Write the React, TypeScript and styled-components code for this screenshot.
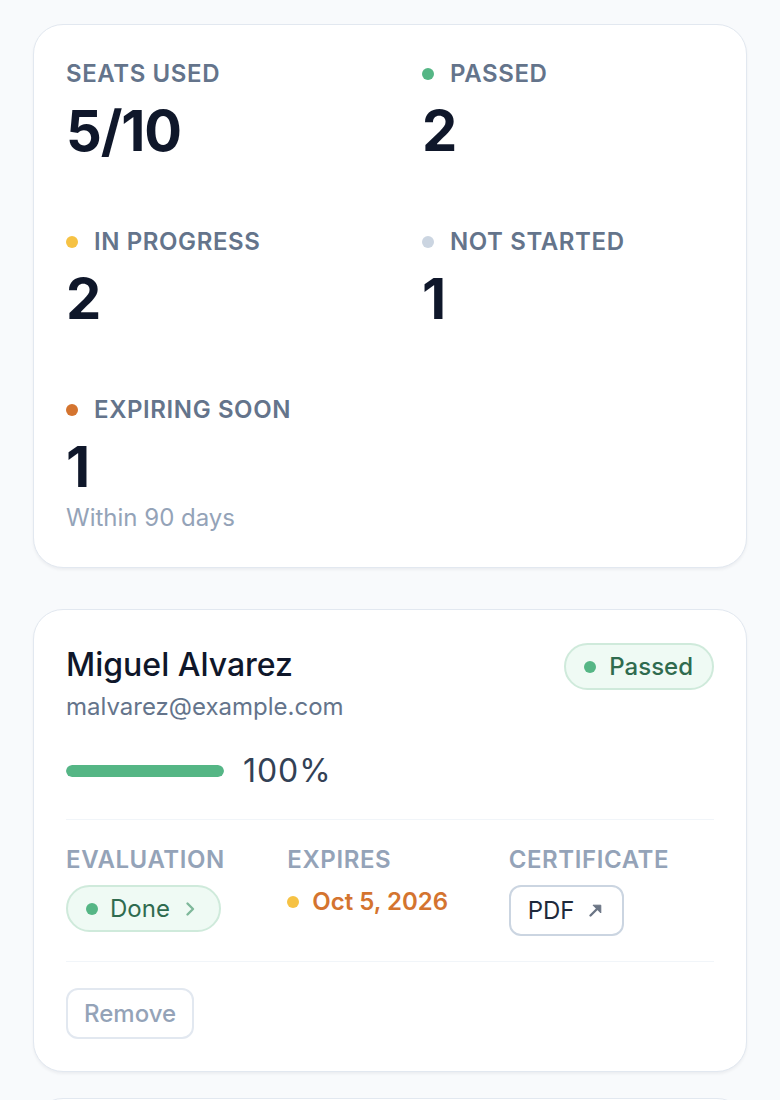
import React from 'react';
import styled, { createGlobalStyle } from 'styled-components';

const GlobalStyle = createGlobalStyle`
  * { box-sizing: border-box; }
  body {
    margin: 0;
    background: #f8fafc;
    font-family: Inter, "Noto Sans", sans-serif;
    color: #0f172a;
  }
`;

const colors = {
  green: '#55b685',
  yellow: '#f6c244',
  gray: '#cbd5e1',
  orange: '#d4742f',
};

const Page = styled.main`
  padding: 24px 33px;
  display: flex;
  flex-direction: column;
`;

const Card = styled.section`
  background: #fff;
  border: 1px solid #e2e8f0;
  border-radius: 30px;
  padding: 33px 32px 32px;
  box-shadow: 0 2px 3px rgba(15, 23, 42, 0.05);
`;

const Summary = styled(Card)`
  display: grid;
  grid-template-columns: 1fr 1fr;
  column-gap: 64px;
  row-gap: 63px;
  padding-bottom: 33px;
  margin-bottom: 41px;
`;

const List = styled.div`
  display: flex;
  flex-direction: column;
  gap: 26px;
`;

const Stat = styled.div`
  display: flex;
  flex-direction: column;
`;

const StatLabel = styled.div`
  display: flex;
  align-items: center;
  gap: 16px;
  font-size: 24px;
  line-height: 32px;
  font-weight: 600;
  letter-spacing: 0.025em;
  color: #64748b;
  text-transform: uppercase;
`;

const Dot = styled.span<{ $color: string }>`
  width: 12px;
  height: 12px;
  border-radius: 50%;
  flex: none;
  background: ${(p) => p.$color};
`;

const StatValue = styled.div`
  margin-top: 9px;
  font-size: 56px;
  line-height: 64px;
  font-weight: 700;
  letter-spacing: -0.02em;
  color: #0f172a;
`;

const StatNote = styled.div`
  margin-top: 3px;
  font-size: 24px;
  line-height: 32px;
  color: #94a3b8;
`;

const Header = styled.div`
  display: flex;
  justify-content: space-between;
  align-items: flex-start;
`;

const Who = styled.div`
  display: flex;
  flex-direction: column;
  gap: 4px;
`;

const Name = styled.div`
  font-size: 32px;
  line-height: 44px;
  font-weight: 500;
  color: #0f172a;
`;

const Email = styled.div`
  font-size: 24px;
  line-height: 32px;
  color: #64748b;
`;

const Pill = styled.span`
  display: inline-flex;
  align-items: center;
  gap: 13px;
  height: 47px;
  padding: 0 19px 0 18px;
  border: 2px solid #cfeadb;
  border-radius: 999px;
  background: #effaf4;
  color: #2f6b4f;
  font-size: 24px;
  font-weight: 500;
  line-height: 32px;
  white-space: nowrap;
`;

const PillButton = styled(Pill).attrs({ as: 'button' })`
  font-family: inherit;
  font-weight: 400;
  cursor: pointer;
  gap: 12px;
  padding-right: 24px;
  svg {
    margin-left: 3px;
    color: #7fb89a;
  }
`;

const Progress = styled.div`
  display: flex;
  align-items: center;
  gap: 19px;
  margin-top: 28px;
`;

const Track = styled.div`
  width: 158px;
  height: 12px;
  border-radius: 6px;
  background: #e2e8f0;
  overflow: hidden;
`;

const Fill = styled.div`
  height: 100%;
  border-radius: 6px;
  background: ${colors.green};
`;

const Percent = styled.span`
  font-size: 32px;
  line-height: 40px;
  color: #334155;
  letter-spacing: 0.03em;
`;

const Divider = styled.hr<{ $top: number; $bottom: number }>`
  border: 0;
  height: 1px;
  background: #f1f5f9;
  margin: ${(p) => `${p.$top}px 0 ${p.$bottom}px`};
`;

const Meta = styled.div`
  display: grid;
  grid-template-columns: repeat(3, 1fr);
  column-gap: 16px;
`;

const MetaCell = styled.div`
  display: flex;
  flex-direction: column;
  align-items: flex-start;
  gap: 9px;
`;

const MetaLabel = styled.div`
  font-size: 24px;
  line-height: 32px;
  font-weight: 600;
  letter-spacing: 0.025em;
  color: #94a3b8;
  text-transform: uppercase;
`;

const Expiry = styled.div`
  display: flex;
  align-items: center;
  gap: 13px;
  margin-top: 1px;
  font-size: 24px;
  line-height: 32px;
  font-weight: 600;
  color: ${colors.orange};
`;

const OutlineButton = styled.button<{ $muted?: boolean }>`
  display: inline-flex;
  align-items: center;
  gap: 14px;
  height: 51px;
  padding: ${(p) => (p.$muted ? '0 16px' : '0 19px 0 17px')};
  border: 2px solid ${(p) => (p.$muted ? '#e2e8f0' : '#cbd5e1')};
  border-radius: 12px;
  background: #fff;
  font-family: inherit;
  font-size: 24px;
  line-height: 32px;
  font-weight: ${(p) => (p.$muted ? 500 : 400)};
  color: ${(p) => (p.$muted ? '#94a3b8' : '#1e293b')};
  cursor: pointer;
  svg {
    color: #6b7585;
  }
`;

const Chevron = () => (
  <svg width="10" height="16" viewBox="0 0 10 16" fill="none" stroke="currentColor" strokeWidth="2.4" strokeLinecap="round" strokeLinejoin="round">
    <path d="M2.5 2.5 8 8l-5.5 5.5" />
  </svg>
);

const ArrowUpRight = () => (
  <svg width="15" height="15" viewBox="0 0 15 15" fill="none">
    <path d="M2.5 12.5 10 5" stroke="currentColor" strokeWidth="2.4" strokeLinecap="round" />
    <path d="M5 2.2h7.8V10z" fill="currentColor" stroke="currentColor" strokeWidth="1" strokeLinejoin="round" />
  </svg>
);

const stats = [
  { label: 'Seats used', value: '5/10' },
  { label: 'Passed', value: '2', dot: colors.green },
  { label: 'In progress', value: '2', dot: colors.yellow },
  { label: 'Not started', value: '1', dot: colors.gray },
  { label: 'Expiring soon', value: '1', dot: colors.orange, note: 'Within 90 days' },
];

const members = [
  { name: 'Miguel Alvarez', email: 'malvarez@example.com', progress: 100, expires: 'Oct 5, 2026' },
  { name: 'Priya Raman', email: 'praman@example.com', progress: 100, expires: 'Mar 12, 2027' },
];

export default function App() {
  return (
    <>
      <GlobalStyle />
      <Page>
        <Summary>
          {stats.map((s) => (
            <Stat key={s.label}>
              <StatLabel>
                {s.dot && <Dot $color={s.dot} />}
                {s.label}
              </StatLabel>
              <StatValue>{s.value}</StatValue>
              {s.note && <StatNote>{s.note}</StatNote>}
            </Stat>
          ))}
        </Summary>
        <List>
          {members.map((m) => (
            <Card key={m.email}>
              <Header>
                <Who>
                  <Name>{m.name}</Name>
                  <Email>{m.email}</Email>
                </Who>
                <Pill>
                  <Dot $color={colors.green} />
                  Passed
                </Pill>
              </Header>
              <Progress>
                <Track>
                  <Fill style={{ width: `${m.progress}%` }} />
                </Track>
                <Percent>{m.progress}%</Percent>
              </Progress>
              <Divider $top={28} $bottom={24} />
              <Meta>
                <MetaCell>
                  <MetaLabel>Evaluation</MetaLabel>
                  <PillButton>
                    <Dot $color={colors.green} />
                    Done
                    <Chevron />
                  </PillButton>
                </MetaCell>
                <MetaCell>
                  <MetaLabel>Expires</MetaLabel>
                  <Expiry>
                    <Dot $color={colors.yellow} />
                    {m.expires}
                  </Expiry>
                </MetaCell>
                <MetaCell>
                  <MetaLabel>Certificate</MetaLabel>
                  <OutlineButton>
                    PDF
                    <ArrowUpRight />
                  </OutlineButton>
                </MetaCell>
              </Meta>
              <Divider $top={25} $bottom={26} />
              <OutlineButton $muted>Remove</OutlineButton>
            </Card>
          ))}
        </List>
      </Page>
    </>
  );
}
